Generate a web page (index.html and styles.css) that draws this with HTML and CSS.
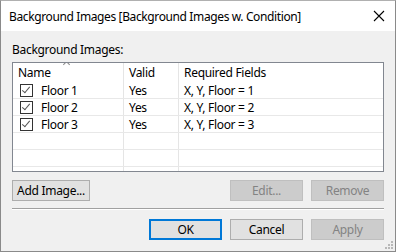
FILE: index.html
```html
<!DOCTYPE html>
<html lang="en">
<head>
    <meta charset="UTF-8">
    <title>Background Images</title>
    <link rel="stylesheet" href="styles.css">
</head>
<body>
    <div class="window">
        <div class="titlebar">
            <span class="title">Background Images [Background Images w. Condition]</span>
            <svg class="close" width="12" height="12" viewBox="0 0 12 12">
                <path d="M1 1 L11 11 M11 1 L1 11" stroke="#000" stroke-width="1.1" fill="none"/>
            </svg>
        </div>
        <div class="content">
            <div class="label">Background Images:</div>
            <div class="list">
                <div class="cols">
                    <div class="col name"></div>
                    <div class="col valid"></div>
                    <div class="col fields"></div>
                </div>
                <div class="rows">
                    <div class="row head">
                        <div class="cell name">Name<span class="sort"></span></div>
                        <div class="cell valid">Valid</div>
                        <div class="cell fields">Required Fields</div>
                    </div>
                    <div class="row">
                        <div class="cell name"><span class="check"></span>Floor 1</div>
                        <div class="cell valid">Yes</div>
                        <div class="cell fields">X, Y, Floor = 1</div>
                    </div>
                    <div class="row">
                        <div class="cell name"><span class="check"></span>Floor 2</div>
                        <div class="cell valid">Yes</div>
                        <div class="cell fields">X, Y, Floor = 2</div>
                    </div>
                    <div class="row">
                        <div class="cell name"><span class="check"></span>Floor 3</div>
                        <div class="cell valid">Yes</div>
                        <div class="cell fields">X, Y, Floor = 3</div>
                    </div>
                    <div class="row"></div>
                    <div class="row"></div>
                </div>
            </div>
            <div class="buttons">
                <button class="btn">Add Image...</button>
                <span class="spacer"></span>
                <button class="btn" disabled>Edit...</button>
                <button class="btn" disabled>Remove</button>
            </div>
            <div class="separator"></div>
            <div class="buttons">
                <span class="spacer"></span>
                <button class="btn default">OK</button>
                <button class="btn">Cancel</button>
                <button class="btn" disabled>Apply</button>
            </div>
        </div>
        <div class="grip">
            <svg width="8" height="8" viewBox="0 0 8 8">
                <rect x="6" y="0" width="2" height="2" fill="#b8b8b8"/>
                <rect x="3" y="3" width="2" height="2" fill="#b8b8b8"/>
                <rect x="6" y="3" width="2" height="2" fill="#b8b8b8"/>
                <rect x="0" y="6" width="2" height="2" fill="#b8b8b8"/>
                <rect x="3" y="6" width="2" height="2" fill="#b8b8b8"/>
                <rect x="6" y="6" width="2" height="2" fill="#b8b8b8"/>
            </svg>
        </div>
    </div>
</body>
</html>
```

FILE: styles.css
```css
body {
    margin: 0;
    font-family: "Noto Sans", "Open Sans", sans-serif;
    font-size: 12px;
    color: #000;
}

.window {
    position: relative;
    width: 396px;
    height: 252px;
    box-sizing: border-box;
    border: 1px solid #8a8a8a;
    border-top-color: #b0b0b0;
    background: #f0f0f0;
    display: flex;
    flex-direction: column;
}

.titlebar {
    height: 30px;
    background: #fff;
    display: flex;
    align-items: center;
    justify-content: space-between;
    padding: 0 10px 0 8px;
}

.title {
    font-size: 12px;
    letter-spacing: -0.38px;
}

.content {
    padding: 0 11px;
    display: flex;
    flex-direction: column;
}

.label {
    margin-top: 10px;
    height: 21px;
    line-height: 17px;
    letter-spacing: -0.3px;
}

.list {
    position: relative;
    height: 110px;
    box-sizing: border-box;
    border: 1px solid #828790;
    background: #fff;
    overflow: hidden;
}

.cols {
    position: absolute;
    inset: 0;
    display: flex;
}

.col.name {
    width: 110px;
    border-right: 1px solid #e5e5e5;
}

.col.valid {
    width: 54px;
    border-right: 1px solid #e5e5e5;
}

.rows {
    position: relative;
}

.row {
    display: flex;
    height: 16px;
    border-bottom: 1px solid #e8e8e8;
    align-items: center;
}

.row.head {
    height: 19px;
    border-bottom: none;
}

.cell {
    white-space: nowrap;
    letter-spacing: -0.3px;
}

.cell.name {
    width: 111px;
    box-sizing: border-box;
    padding-left: 5px;
    position: relative;
    display: flex;
    align-items: center;
}

.row:not(.head) .cell.name {
    padding-left: 7px;
}

.cell.valid {
    width: 55px;
    box-sizing: border-box;
    padding-left: 5px;
}

.cell.fields {
    padding-left: 5px;
}

.sort {
    position: absolute;
    left: 51px;
    top: -2px;
    width: 4px;
    height: 4px;
    border-left: 1px solid #8a8a8a;
    border-top: 1px solid #8a8a8a;
    transform: rotate(45deg);
}

.check {
    width: 11px;
    height: 11px;
    border: 1px solid #333;
    margin-right: 8px;
    position: relative;
    background: #fff;
}

.check::after {
    content: "";
    position: absolute;
    left: 3px;
    top: 0px;
    width: 3px;
    height: 7px;
    border-right: 1px solid #555;
    border-bottom: 1px solid #555;
    transform: rotate(40deg);
}

.buttons {
    display: flex;
    gap: 8px;
    margin-top: 8px;
}

.spacer {
    flex: 1;
}

.btn {
    width: 73px;
    height: 21px;
    box-sizing: border-box;
    padding: 0;
    font: inherit;
    letter-spacing: -0.3px;
    background: #e1e1e1;
    border: 1px solid #adadad;
    color: #000;
}

.btn:first-child {
    width: 78px;
}

.btn.default {
    border: 2px solid #0078d7;
}

.btn:disabled {
    background: #cccccc;
    border-color: #bfbfbf;
    color: #838383;
}

.separator {
    margin-top: 7px;
    height: 0;
    border-top: 1px solid #a0a0a0;
    border-bottom: 1px solid #fff;
    margin-bottom: 1px;
}

.grip {
    position: absolute;
    right: 2px;
    bottom: 2px;
    line-height: 0;
}
```
